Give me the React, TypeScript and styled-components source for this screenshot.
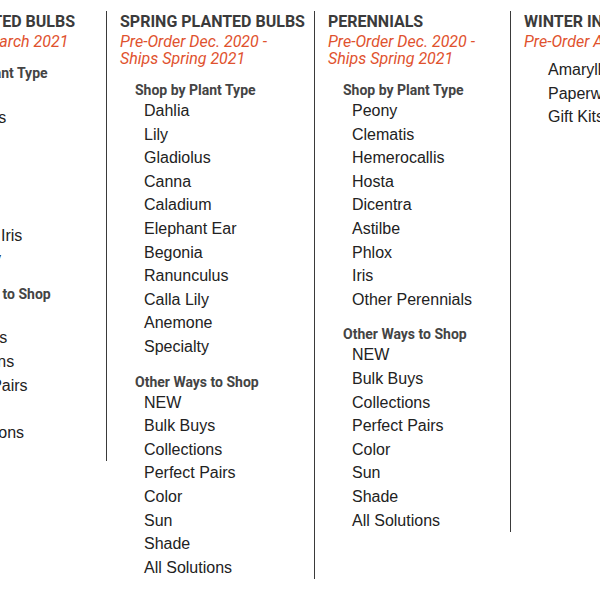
import React from "react";
import styled, { createGlobalStyle } from "styled-components";

const GlobalStyle = createGlobalStyle`
  html, body {
    margin: 0;
    padding: 0;
    background: #fff;
  }
`;

const Viewport = styled.div`
  width: 600px;
  height: 600px;
  overflow: hidden;
  background: #fff;
`;

const Menu = styled.nav`
  display: flex;
  flex-flow: row nowrap;
  align-items: flex-start;
  padding-top: 11px;
  margin-left: -101px;
  width: max-content;
`;

const Column = styled.section<{ $width: number; $padBottom?: number }>`
  box-sizing: border-box;
  flex: 0 0 ${(p) => p.$width}px;
  width: ${(p) => p.$width}px;
  padding: 0 8px ${(p) => p.$padBottom ?? 0}px 13px;
  border-right: 1px solid #3a3a3a;
`;

const Heading = styled.h3`
  margin: 0;
  font-family: Roboto, "Liberation Sans", sans-serif;
  font-weight: 700;
  font-size: 16px;
  line-height: 22px;
  color: #3b3b3b;
  text-transform: uppercase;
  white-space: nowrap;
`;

const Tagline = styled.p`
  margin: 0;
  font-family: Roboto, "Liberation Sans", sans-serif;
  font-style: italic;
  font-size: 16px;
  line-height: 17px;
  color: #df522e;
`;

const GroupLabel = styled.h4`
  margin: 14px 0 0 15px;
  font-family: Roboto, "Liberation Sans", sans-serif;
  font-weight: 700;
  font-size: 14px;
  line-height: 18px;
  color: #444;
  white-space: nowrap;
`;

const List = styled.ul<{ $bare?: boolean }>`
  list-style: none;
  margin: ${(p) => (p.$bare ? "8px" : "0")} 0 0;
  padding: 0 0 0 24px;
`;

const Item = styled.li`
  font-family: "Liberation Sans", Arial, sans-serif;
  font-size: 16px;
  line-height: 23.6px;
  color: #222;
  white-space: nowrap;
`;

type Group = { label?: string; items: string[] };
type Col = {
  title: string;
  tagline: string;
  width: number;
  padBottom?: number;
  groups: Group[];
};

const otherWays = [
  "NEW",
  "Bulk Buys",
  "Collections",
  "Perfect Pairs",
  "Color",
  "Sun",
  "Shade",
  "All Solutions",
];

const columns: Col[] = [
  {
    title: "Fall Planted Bulbs",
    tagline: "Ships Nov-March 2021",
    width: 208,
    padBottom: 17,
    groups: [
      {
        label: "Shop by Plant Type",
        items: [
          "Tulips",
          "Hyacinths",
          "Alliums",
          "Crocus",
          "Muscari",
          "Fritillaria",
          "Bearded Iris",
          "Specialty",
        ],
      },
      {
        label: "Other Ways to Shop",
        items: ["NEW", "Bulk Buys", "Collections", "Perfect Pairs", "Color", "All Solutions"],
      },
    ],
  },
  {
    title: "Spring Planted Bulbs",
    tagline: "Pre-Order Dec. 2020 - Ships Spring 2021",
    width: 208,
    groups: [
      {
        label: "Shop by Plant Type",
        items: [
          "Dahlia",
          "Lily",
          "Gladiolus",
          "Canna",
          "Caladium",
          "Elephant Ear",
          "Begonia",
          "Ranunculus",
          "Calla Lily",
          "Anemone",
          "Specialty",
        ],
      },
      { label: "Other Ways to Shop", items: otherWays },
    ],
  },
  {
    title: "Perennials",
    tagline: "Pre-Order Dec. 2020 - Ships Spring 2021",
    width: 196,
    groups: [
      {
        label: "Shop by Plant Type",
        items: [
          "Peony",
          "Clematis",
          "Hemerocallis",
          "Hosta",
          "Dicentra",
          "Astilbe",
          "Phlox",
          "Iris",
          "Other Perennials",
        ],
      },
      { label: "Other Ways to Shop", items: otherWays },
    ],
  },
  {
    title: "Winter Indoor Bulbs",
    tagline: "Pre-Order Available Now",
    width: 240,
    groups: [{ items: ["Amaryllis", "Paperwhites", "Gift Kits"] }],
  },
];

export default function App() {
  return (
    <Viewport>
      <GlobalStyle />
      <Menu>
        {columns.map((col) => (
          <Column key={col.title} $width={col.width} $padBottom={col.padBottom}>
            <Heading>{col.title}</Heading>
            <Tagline>{col.tagline}</Tagline>
            {col.groups.map((g, i) => (
              <div key={i}>
                {g.label && <GroupLabel>{g.label}</GroupLabel>}
                <List $bare={!g.label}>
                  {g.items.map((it) => (
                    <Item key={it}>{it}</Item>
                  ))}
                </List>
              </div>
            ))}
          </Column>
        ))}
      </Menu>
    </Viewport>
  );
}
